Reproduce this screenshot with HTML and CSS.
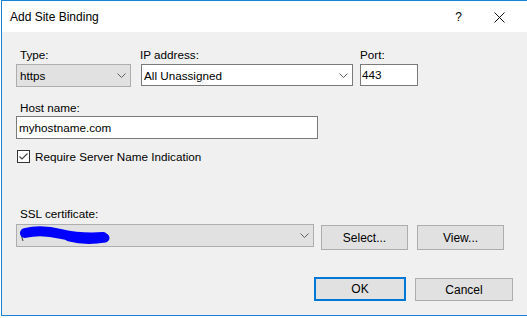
FILE: index.html
```html
<!DOCTYPE html>
<html lang="en">
<head>
  <meta charset="UTF-8">
  <title>Add Site Binding</title>
  <link rel="stylesheet" href="styles.css">
</head>
<body>
  <div class="window">
    <div class="titlebar">
      <span class="title">Add Site Binding</span>
      <span class="help">?</span>
      <svg class="close" width="11" height="11" viewBox="0 0 11 11">
        <path d="M0.5 0.5 L10.5 10.5 M10.5 0.5 L0.5 10.5" stroke="#111" stroke-width="1" fill="none"/>
      </svg>
    </div>

    <div class="content">
      <div class="row-top">
        <div class="field type-field">
          <div class="label inset">Type:</div>
          <div class="combo gray type-combo">
            <span class="value">https</span>
            <svg class="chev" width="9" height="5" viewBox="0 0 9 5"><path d="M0.5 0.5 L4.5 4.5 L8.5 0.5" stroke="#606060" fill="none"/></svg>
          </div>
        </div>
        <div class="field ip-field">
          <div class="label">IP address:</div>
          <div class="combo white ip-combo">
            <span class="value">All Unassigned</span>
            <svg class="chev" width="9" height="5" viewBox="0 0 9 5"><path d="M0.5 0.5 L4.5 4.5 L8.5 0.5" stroke="#606060" fill="none"/></svg>
          </div>
        </div>
        <div class="field port-field">
          <div class="label">Port:</div>
          <div class="textbox port-box">443</div>
        </div>
      </div>

      <div class="field host-field">
        <div class="label inset">Host name:</div>
        <div class="textbox host-box">myhostname.com</div>
      </div>

      <div class="check-row">
        <svg class="checkbox" width="13" height="13" viewBox="0 0 13 13">
          <rect x="0.5" y="0.5" width="12" height="12" fill="#fff" stroke="#333"/>
          <path d="M2.5 6.5 L5 9 L10.5 3.5" stroke="#444" stroke-width="1.2" fill="none"/>
        </svg>
        <span>Require Server Name Indication</span>
      </div>

      <div class="field ssl-field">
        <div class="label inset">SSL certificate:</div>
        <div class="ssl-row">
          <div class="combo gray ssl-combo">
            <span class="value"></span>
            <!-- redacted certificate name -->
            <svg class="scribble" width="92" height="20" viewBox="0 0 92 20">
              <path d="M2 8 L4 15" stroke="#333" stroke-width="1" fill="none"/>
              <path d="M6 7 C18 4 30 5 42 8 C55 11 70 12 84 11" stroke="#0000ff" stroke-width="10" stroke-linecap="round" fill="none"/>
              <path d="M50 11 C62 14 74 14 86 12" stroke="#0000ff" stroke-width="9" stroke-linecap="round" fill="none"/>
            </svg>
            <svg class="chev" width="9" height="5" viewBox="0 0 9 5"><path d="M0.5 0.5 L4.5 4.5 L8.5 0.5" stroke="#606060" fill="none"/></svg>
          </div>
          <button class="btn select-btn">Select...</button>
          <button class="btn view-btn">View...</button>
        </div>
      </div>

      <div class="actions">
        <button class="btn ok-btn">OK</button>
        <button class="btn cancel-btn">Cancel</button>
      </div>
    </div>
  </div>
</body>
</html>
```

FILE: styles.css
```css
* {
  box-sizing: border-box;
}
html, body {
  margin: 0;
  background: #fff;
  font-family: 'Liberation Sans', Arial, sans-serif;
  font-size: 11.7px;
  color: #000;
}
.window {
  margin-left: 1px;
  width: 526px;
  height: 316px;
  border: 1px solid #1883d7;
  border-right: none;
  display: flex;
  flex-direction: column;
  overflow: hidden;
}
.titlebar {
  height: 31px;
  flex: none;
  background: #fff;
  display: flex;
  align-items: center;
  padding-left: 8px;
  padding-top: 1px;
}
.title {
  font-size: 12px;
  flex: 1;
}
.help {
  font-size: 12px;
  margin-right: 32px;
}
.close {
  margin-right: 22px;
}
.content {
  flex: 1;
  background: #f0f0f0;
  padding: 15px 0 0 14px;
}
.row-top {
  display: flex;
}
.label {
  height: 15px;
  line-height: 15px;
  margin-bottom: 2px;
  white-space: nowrap;
}
.label.inset {
  padding-left: 4px;
}
.ip-field {
  margin-left: 10px;
}
.ip-field .label {
  margin-left: -1px;
}
.port-field {
  margin-left: 7px;
}
.combo {
  height: 23px;
  display: flex;
  align-items: center;
  position: relative;
  border: 1px solid #adadad;
}
.combo.gray {
  background: #e1e1e1;
}
.combo.white {
  background: #fff;
  border-color: #7a7a7a;
}
.combo .value {
  flex: 1;
}
.chev {
  margin-right: 4px;
}
.type-combo {
  width: 115px;
  padding-left: 3px;
}
.ip-combo {
  width: 212px;
  margin-top: 1px;
  height: 22px;
  padding-left: 2px;
}
.textbox {
  height: 23px;
  line-height: 21px;
  background: #fff;
  border: 1px solid #7a7a7a;
  padding-left: 1px;
}
.port-box {
  width: 58px;
  margin-top: 1px;
  height: 22px;
  line-height: 20px;
}
.host-field {
  margin-top: 13px;
}
.host-field .label {
  margin-bottom: 1px;
}
.host-box {
  width: 302px;
  padding-left: 2px;
}
.check-row {
  margin-top: 11px;
  margin-left: 1px;
  height: 13px;
  display: flex;
  align-items: center;
  gap: 5px;
}
.ssl-field {
  margin-top: 43px;
}
.ssl-row {
  display: flex;
  align-items: flex-start;
}
.ssl-combo {
  width: 298px;
  margin-top: 1px;
  padding-left: 3px;
}
.scribble {
  position: absolute;
  left: 2px;
  top: 1px;
}
.btn {
  font-family: inherit;
  font-size: 12px;
  color: #000;
  background: #e1e1e1;
  border: 1px solid #adadad;
  height: 25px;
  padding: 0;
}
.select-btn {
  width: 87px;
  margin-left: 7px;
  margin-top: 2px;
}
.view-btn {
  width: 87px;
  margin-left: 9px;
  margin-top: 2px;
}
.actions {
  margin-top: 27px;
  display: flex;
  padding-left: 298px;
}
.ok-btn {
  width: 92px;
  height: 24px;
  border: 2px solid #0078d7;
}
.cancel-btn {
  width: 98px;
  height: 23px;
  margin-left: 9px;
  margin-top: 1px;
}
```
